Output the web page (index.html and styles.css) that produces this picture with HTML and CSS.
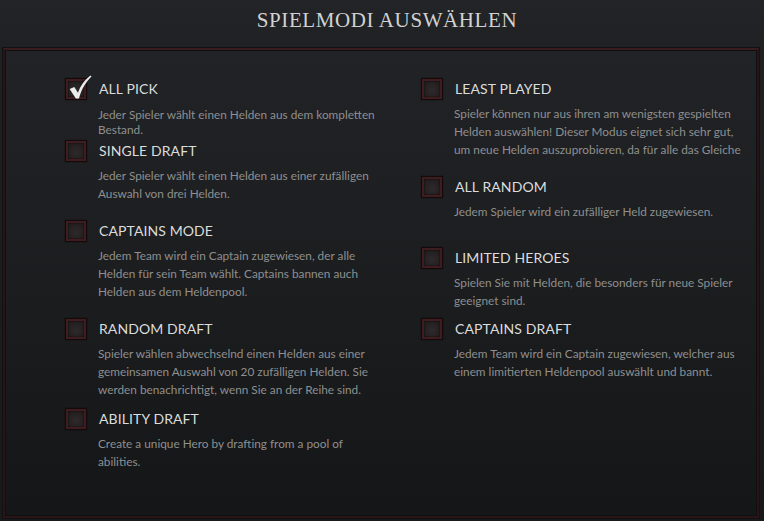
FILE: index.html
```html
<!DOCTYPE html>
<html lang="de">
<head>
<meta charset="utf-8">
<title>Spielmodi auswählen</title>
<link rel="stylesheet" href="styles.css">
</head>
<body>
<header class="head"><h1 class="title">SPIELMODI AUSWÄHLEN</h1></header>
<main class="panel">
  <section class="col">
    <div class="mode tight">
      <div class="row"><span class="box checked"><svg class="tick" viewBox="0 0 24 24" width="25" height="25"><path d="M2.5 13.5 L7 11.5 L10.5 17 C13 10 17 4.5 22.5 0.5 L23.5 1.5 C18 7 14 13.5 11.5 22.5 L8.5 22.5 Z" fill="#ececec"/></svg></span><span class="name">ALL PICK</span></div>
      <p class="desc">Jeder Spieler wählt einen Helden aus dem kompletten<br>Bestand.</p>
    </div>
    <div class="mode">
      <div class="row"><span class="box"></span><span class="name">SINGLE DRAFT</span></div>
      <p class="desc">Jeder Spieler wählt einen Helden aus einer zufälligen<br>Auswahl von drei Helden.</p>
    </div>
    <div class="mode">
      <div class="row"><span class="box"></span><span class="name">CAPTAINS MODE</span></div>
      <p class="desc">Jedem Team wird ein Captain zugewiesen, der alle<br>Helden für sein Team wählt. Captains bannen auch<br>Helden aus dem Heldenpool.</p>
    </div>
    <div class="mode short">
      <div class="row"><span class="box"></span><span class="name">RANDOM DRAFT</span></div>
      <p class="desc">Spieler wählen abwechselnd einen Helden aus einer<br>gemeinsamen Auswahl von 20 zufälligen Helden. Sie<br>werden benachrichtigt, wenn Sie an der Reihe sind.</p>
    </div>
    <div class="mode">
      <div class="row"><span class="box"></span><span class="name">ABILITY DRAFT</span></div>
      <p class="desc">Create a unique Hero by drafting from a pool of<br>abilities.</p>
    </div>
  </section>
  <section class="col">
    <div class="mode">
      <div class="row"><span class="box"></span><span class="name">LEAST PLAYED</span></div>
      <p class="desc">Spieler können nur aus ihren am wenigsten gespielten<br>Helden auswählen! Dieser Modus eignet sich sehr gut,<br>um neue Helden auszuprobieren, da für alle das Gleiche</p>
    </div>
    <div class="mode wide">
      <div class="row"><span class="box"></span><span class="name">ALL RANDOM</span></div>
      <p class="desc">Jedem Spieler wird ein zufälliger Held zugewiesen.</p>
    </div>
    <div class="mode short2">
      <div class="row"><span class="box"></span><span class="name">LIMITED HEROES</span></div>
      <p class="desc">Spielen Sie mit Helden, die besonders für neue Spieler<br>geeignet sind.</p>
    </div>
    <div class="mode">
      <div class="row"><span class="box"></span><span class="name">CAPTAINS DRAFT</span></div>
      <p class="desc">Jedem Team wird ein Captain zugewiesen, welcher aus<br>einem limitierten Heldenpool auswählt und bannt.</p>
    </div>
  </section>
</main>
</body>
</html>
```

FILE: styles.css
```css
html, body {
  margin: 0;
  padding: 0;
}
body {
  width: 764px;
  height: 521px;
  overflow: hidden;
  background: linear-gradient(#222427, #1e2022 60px, #17191a);
  font-family: Lato, "Open Sans", sans-serif;
}
.head {
  height: 48px;
  display: flex;
  justify-content: center;
  align-items: flex-start;
}
.title {
  margin: 8px 0 0 10px;
  font-family: "Liberation Serif", serif;
  font-weight: normal;
  font-size: 21px;
  letter-spacing: 0.6px;
  color: #d2d2d2;
  line-height: 24px;
}
.panel {
  margin: 0 5px 0 3px;
  height: 470px;
  border: 2px solid #2b1416;
  border-top-color: #3a1c1f;
  box-shadow: inset 0 0 0 1px #0e0f10, 0 0 0 1px #101112;
  background: linear-gradient(#212326, #1b1d1f 50%, #141617);
  display: flex;
  padding: 29px 0 0 61px;
  box-sizing: border-box;
}
.col {
  flex: 0 0 356px;
  display: flex;
  flex-direction: column;
}
.col + .col {
  flex: 1 1 auto;
}
.mode {
  margin-bottom: 18px;
}
.mode.tight { margin-bottom: 4.5px; }
.mode.tight .desc {
  line-height: 15px;
  margin-top: 7.5px;
}
.mode.short { margin-bottom: 10px; }
.mode.short2 { margin-bottom: 9px; }
.mode.wide { margin-bottom: 27px; }
.row {
  display: flex;
  align-items: center;
  gap: 13px;
  height: 20px;
}
.box {
  position: relative;
  width: 16px;
  height: 16px;
  border: 2px solid #3e1c1f;
  background: radial-gradient(circle at 50% 60%, #2e2a2b, #1f1b1c);
  box-shadow: 0 0 1px 1px #150a0b, inset 0 0 2px #0c0808;
}
.tick {
  position: absolute;
  left: -1px;
  top: -6px;
}
.name {
  font-size: 14px;
  color: #dcdcdc;
  letter-spacing: 0.1px;
  line-height: 20px;
}
.desc {
  margin: 6px 0 0 32px;
  font-size: 11.8px;
  line-height: 18px;
  color: #8f8f8f;
  white-space: nowrap;
}
```
